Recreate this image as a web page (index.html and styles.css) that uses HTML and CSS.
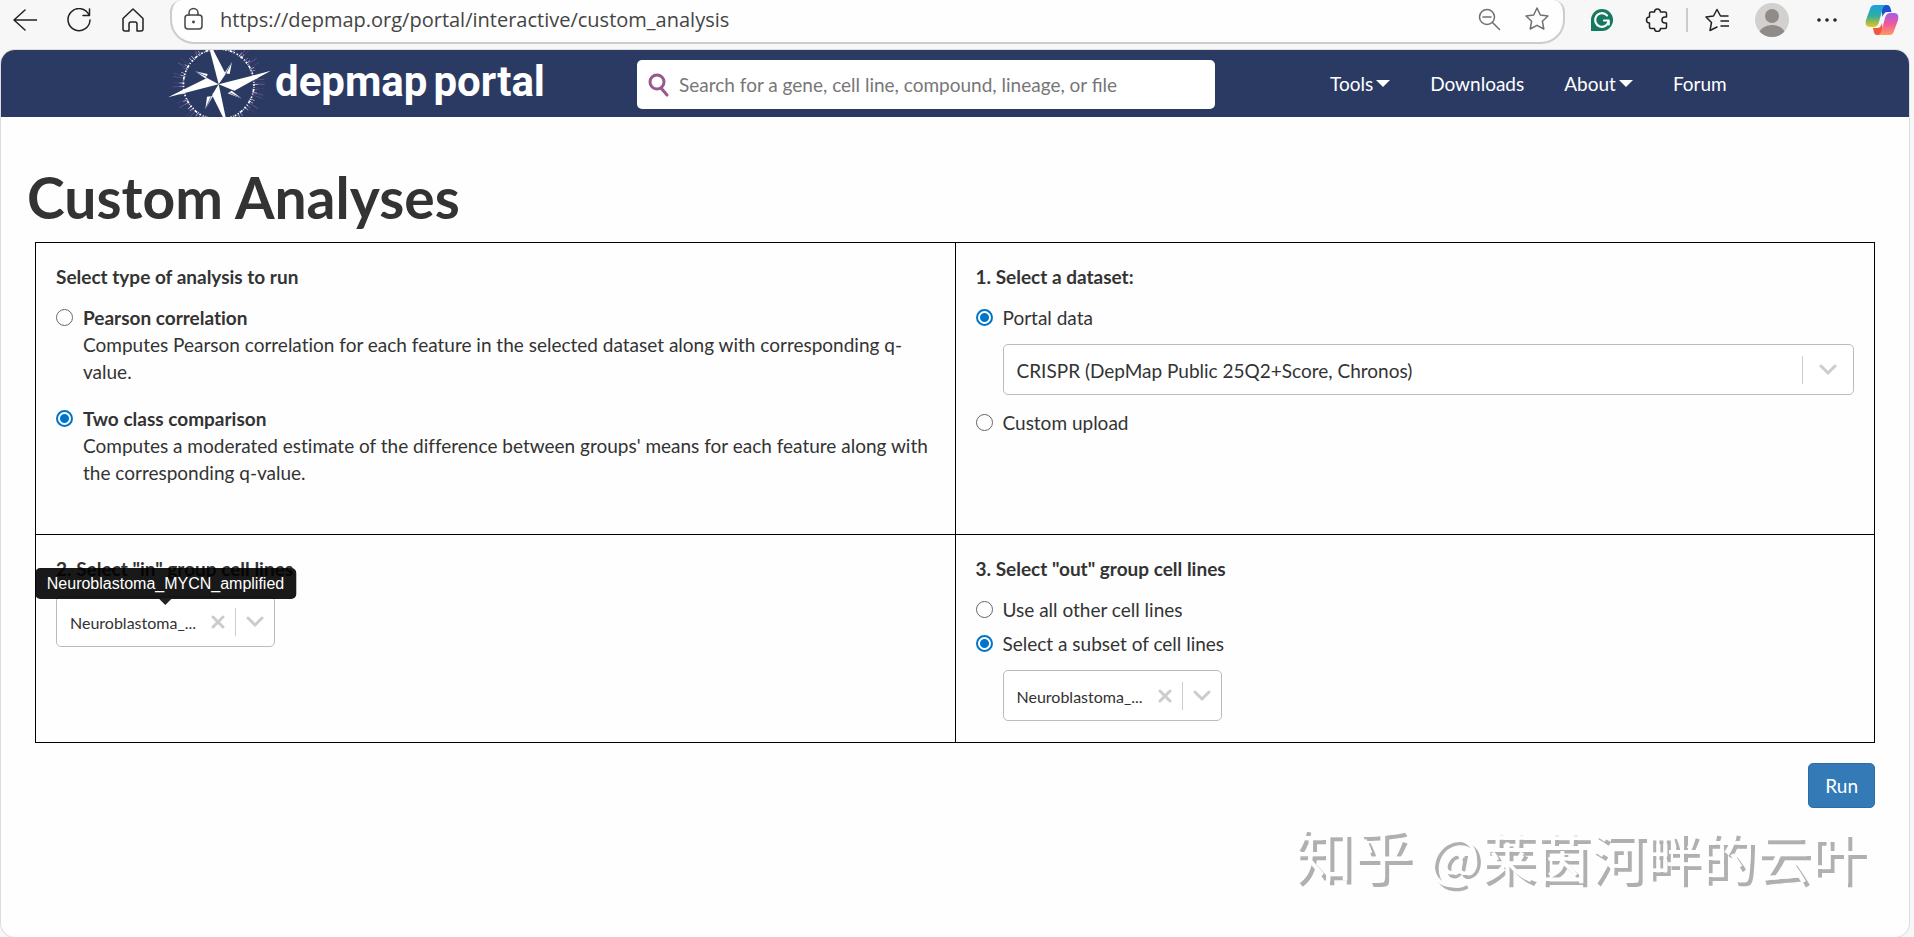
FILE: index.html
```html
<!DOCTYPE html>
<html lang="en">
<head>
  <meta charset="UTF-8">
  <meta name="viewport" content="width=device-width, initial-scale=1.0">
  <title>Custom Analyses</title>
  <link rel="stylesheet" href="styles.css">
</head>

<body>
  <div class="browser-bar">
    <div class="browser-nav">
      <button type="button" aria-label="Back">
        <svg class="icon" viewBox="0 0 24 24"><path d="M24 12H1M12 2L1 12l11 10" /></svg>
      </button>
      <button type="button" aria-label="Refresh">
        <svg class="icon" viewBox="0 0 24 24"><path d="M22 7A11 11 0 1 0 23 12M22.500 1v6.500H16" /></svg>
      </button>
      <button type="button" aria-label="Home">
        <svg class="icon" viewBox="0 0 24 24"><path d="M2 10.500L12 1l10 9.500V21a2 2 0 0 1-2 2h-4v-7a2 2 0 0 0-2-2h-4a2 2 0 0 0-2 2v7H4a2 2 0 0 1-2-2z" /></svg>
      </button>
    </div>

    <div class="address-bar">
      <svg class="icon icon-grey" viewBox="0 0 24 24"><rect x="4" y="8" width="17" height="14" rx="3" /><path d="M8 8V6a4.500 4.500 0 0 1 9 0v2" /><circle cx="12.500" cy="15" r=".7" fill="currentColor" /></svg>
      <input class="address" type="text" aria-label="Address" value="https://depmap.org/portal/interactive/custom_analysis">
      <button type="button" aria-label="Zoom out">
        <svg class="icon icon-light" viewBox="0 0 24 24"><circle cx="10" cy="10" r="7.500" /><path d="M6 10h8M15.500 15.500L22.500 22.500" /></svg>
      </button>
      <button type="button" aria-label="Add to favorites">
        <svg class="icon icon-light" viewBox="0 0 24 24"><path d="M12 1l3.300 7 7.700 1-5.600 5.300L18.800 22 12 18.300 5.200 22l1.400-7.700L1 9l7.700-1z" /></svg>
      </button>
    </div>

    <div class="browser-tools">
      <button type="button" aria-label="Grammarly">
        <svg class="icon" viewBox="0 0 24 24"><path d="M1 23V12A11 11 0 1 1 12 23z" fill="#15795f" stroke="none" /><path d="M17 7.500A6.800 6.800 0 1 0 18.700 12.500H14M18.700 12.500v4" stroke="#fff" stroke-width="2.200" /></svg>
      </button>
      <button type="button" aria-label="Extensions">
        <svg class="icon" viewBox="0 0 24 24"><path d="M4.500 9V5.500A1.500 1.500 0 0 1 6 4h3.500a3 3 0 0 1 6 0H20a1.500 1.500 0 0 1 1.500 1.500V9H20a3 3 0 0 0 0 6h1.500v4a1.500 1.500 0 0 1-1.500 1.500h-4.500a3 3 0 0 1-6 0H6A1.500 1.500 0 0 1 4.500 19v-4a3 3 0 0 1 0-6z" /></svg>
      </button>
    </div>
    <span class="divider"></span>
    <div class="browser-tools">
      <button type="button" aria-label="Favorites">
        <svg class="icon" viewBox="0 0 24 24"><path d="M12 19l-7 3.500 1.500-8L1 9l7.500-1L12 1.500 15.500 8H23M16 13h8M16 18h8" /></svg>
      </button>
      <button type="button" aria-label="Profile">
        <svg class="icon-large" viewBox="0 0 34 34"><clipPath id="face"><circle cx="17" cy="17" r="17" /></clipPath><g clip-path="url(#face)"><path d="M0 0h34v34H0z" fill="#d3d1cf" /><circle cx="17" cy="13" r="7" fill="#8e8b89" /><ellipse cx="17" cy="31" rx="13" ry="9" fill="#8e8b89" /></g></svg>
      </button>
      <button type="button" aria-label="More">
        <svg class="icon" viewBox="0 0 24 24"><g fill="currentColor" stroke="none"><circle cx="4" cy="12" r="1.800" /><circle cx="12" cy="12" r="1.800" /><circle cx="20" cy="12" r="1.800" /></g></svg>
      </button>
      <button type="button" aria-label="Copilot">
        <svg class="icon-large" viewBox="0 0 34 34">
          <defs>
            <linearGradient id="cool" x1="0" y1="0" x2="0" y2="1"><stop offset="0" stop-color="#1b9fe8" /><stop offset=".5" stop-color="#2fae9b" /><stop offset="1" stop-color="#ecc51c" /></linearGradient>
            <linearGradient id="warm" x1="0" y1="0" x2="0" y2="1"><stop offset="0" stop-color="#a45bea" /><stop offset=".5" stop-color="#ee5a9c" /><stop offset="1" stop-color="#ff9a5c" /></linearGradient>
          </defs>
          <path d="M16 2h6c3 0 3.500 3 4.500 7h-4c-3 0-4 2-5 5z" fill="#1c50cf" />
          <path d="M18 32h-6c-3 0-3-3-4-7h4c3 0 4-2 5-5z" fill="#ef5a3c" />
          <path d="M10 2h12c-3 0-4 2-5 6l-3 11c-1 4-3 5-6 5H5c-4 0-5-3-4-7L5 6c1-3 2-4 5-4z" fill="url(#cool)" />
          <path d="M24 32H12c3 0 4-2 5-6l3-11c1-4 3-5 6-5h3c4 0 5 3 4 7l-4 11c-1 3-2 4-5 4z" fill="url(#warm)" />
        </svg>
      </button>
    </div>
  </div>

  <div class="page">
    <header class="header">
      <a class="logo" href="#">
        <svg class="compass" viewBox="0 0 310 201">
          <circle cx="157" cy="103" r="122" fill="none" stroke="#a468b0" stroke-opacity=".6" stroke-width="32" stroke-dasharray="2 9 1 16 2 7 1 28 2 12 1 44" />
          <circle cx="157" cy="103" r="110" fill="none" stroke="#c9b3dc" stroke-width="16" stroke-dasharray="2 13 1 8 2 20 2 6" />
          <circle cx="157" cy="103" r="106" fill="none" stroke="#fff" stroke-width="5" stroke-dasharray="5 4 2 3 9 5 3 6" />
          <g fill="#fff">
            <path d="M120-40L178 72 157 103z" />
            <path d="M312 63L204 122 157 103z" />
            <path d="M184 230L137 135 157 103z" />
            <path d="M5 142L122 84 157 103z" />
            <path d="M197 35L190 72 174 70z" />
            <path d="M86 64L124 72 119 86z" />
            <path d="M227 146L196 122 184 130z" />
            <path d="M117 178L122 140 140 138z" />
          </g>
          <path d="M197 35L178 72M86 64L122 80M227 146L190 128M117 178L134 140" stroke="#2b3a63" stroke-width="2" />
        </svg>
        <span class="logo-text"><span>depmap</span><span>portal</span></span>
      </a>
      <div class="search">
        <svg class="search-icon" viewBox="0 0 22 24"><circle cx="9" cy="9" r="7" /><path d="M13 15l6 7" /></svg>
        <input type="text" aria-label="Search" placeholder="Search for a gene, cell line, compound, lineage, or file">
      </div>
      <nav class="menu">
        <a href="#">Tools <span class="caret"></span></a>
        <a href="#">Downloads</a>
        <a href="#">About <span class="caret"></span></a>
        <a href="#">Forum</a>
      </nav>
    </header>

    <main>
      <h1>Custom Analyses</h1>
      <form class="analysis">
        <div class="grid">
          <section class="cell cell-tall">
            <h2>Select type of analysis to run</h2>
            <div class="choice">
              <input type="radio" name="analysis" id="pearson">
              <label for="pearson"><strong>Pearson correlation</strong><br>Computes Pearson correlation for each feature in the selected dataset along with corresponding q-<wbr>value.</label>
            </div>
            <div class="choice choice-spaced">
              <input type="radio" name="analysis" id="two-class" checked>
              <label for="two-class"><strong>Two class comparison</strong><br>Computes a moderated estimate of the difference between groups' means for each feature along with the corresponding q-value.</label>
            </div>
          </section>

          <section class="cell cell-tall">
            <h2>1. Select a dataset:</h2>
            <div class="choice">
              <input type="radio" name="dataset" id="portal-data" checked>
              <label for="portal-data">Portal data</label>
            </div>
            <div class="dropdown dropdown-wide indented">
              <select aria-label="Dataset">
                <option>CRISPR (DepMap Public 25Q2+Score, Chronos)</option>
              </select>
              <span class="separator"></span>
              <svg class="chevron" viewBox="0 0 18 12"><path d="M2 2l7 7 7-7" /></svg>
            </div>
            <div class="choice">
              <input type="radio" name="dataset" id="custom-upload">
              <label for="custom-upload">Custom upload</label>
            </div>
          </section>

          <section class="cell">
            <h2>2. Select "in" group cell lines</h2>
            <div class="dropdown">
              <select aria-label="In group cell lines">
                <option>Neuroblastoma_...</option>
              </select>
              <button class="clear" type="button" aria-label="Clear">
                <svg viewBox="0 0 14 14"><path d="M2 2l10 10M12 2L2 12" /></svg>
              </button>
              <span class="separator"></span>
              <svg class="chevron" viewBox="0 0 18 12"><path d="M2 2l7 7 7-7" /></svg>
              <div class="tooltip" role="tooltip">Neuroblastoma_MYCN_amplified</div>
            </div>
          </section>

          <section class="cell">
            <h2>3. Select "out" group cell lines</h2>
            <div class="choice">
              <input type="radio" name="out-group" id="all-other">
              <label for="all-other">Use all other cell lines</label>
            </div>
            <div class="choice choice-close">
              <input type="radio" name="out-group" id="subset" checked>
              <label for="subset">Select a subset of cell lines</label>
            </div>
            <div class="dropdown indented">
              <select aria-label="Out group cell lines">
                <option>Neuroblastoma_...</option>
              </select>
              <button class="clear" type="button" aria-label="Clear">
                <svg viewBox="0 0 14 14"><path d="M2 2l10 10M12 2L2 12" /></svg>
              </button>
              <span class="separator"></span>
              <svg class="chevron" viewBox="0 0 18 12"><path d="M2 2l7 7 7-7" /></svg>
            </div>
          </section>
        </div>
        <div class="actions">
          <button class="run" type="button">Run</button>
        </div>
      </form>
      <p class="watermark" lang="zh-CN"><span class="watermark-site">知乎</span> @莱茵河畔的云叶</p>
    </main>
  </div>
</body>
</html>
```
FILE: styles.css
```css
* {
  box-sizing: border-box;
}

body {
  margin: 0;
  background: #f7f7f7;
  color: #333;
  font-family: Lato, sans-serif;
  font-size: 19px;
  line-height: 27px;
}

button {
  padding: 0;
  border: 0;
  background: none;
  color: inherit;
  font: inherit;
  cursor: pointer;
}

input,
select {
  font: inherit;
  color: inherit;
}

/* Browser toolbar */
.browser-bar {
  display: flex;
  height: 50px;
  padding: 0 15px 0 13px;
  color: #222;
}

.browser-nav,
.browser-tools {
  display: flex;
  height: 40px;
  align-items: center;
}

.browser-nav {
  gap: 30px;
  margin-right: 25px;
}

.browser-tools {
  gap: 21px;
}

.browser-tools button {
  display: flex;
  justify-content: center;
  width: 34px;
}

.icon {
  display: block;
  width: 24px;
  height: 24px;
  fill: none;
  stroke: currentColor;
  stroke-width: 1.5;
  stroke-linecap: round;
  stroke-linejoin: round;
}

.icon-grey {
  color: #444;
}

.icon-light {
  color: #707070;
}

.icon-large {
  display: block;
  width: 34px;
  height: 34px;
}

.divider {
  width: 2px;
  height: 24px;
  margin: 8px 12px;
  background: #ccc;
}

.address-bar {
  display: flex;
  flex: 1;
  align-items: center;
  gap: 24px;
  height: 44px;
  margin-right: 20px;
  padding: 0 14px 4px 9px;
  border: 2px solid #ccc;
  border-top: 0;
  border-radius: 12px 12px 24px 24px;
  background: #fefefe;
}

.address {
  flex: 1;
  margin-left: -9px;
  padding: 0;
  border: 0;
  background: none;
  color: #444;
  font-family: "Open Sans", sans-serif;
  font-size: 20px;
}

/* Page */
.page {
  min-height: calc(100vh - 50px);
  margin: 0 5px 0 1px;
  border-radius: 14px;
  background: #fefefe;
  box-shadow: 0 0 0 1px #ddd;
}

.header {
  display: flex;
  align-items: center;
  height: 67px;
  padding-left: 165px;
  border-radius: 14px 14px 0 0;
  background: #2b3a63;
  color: #fff;
}

.logo {
  display: flex;
  flex: 0 0 471px;
  gap: 5px;
  color: inherit;
  text-decoration: none;
}

.compass {
  width: 104px;
  height: 67px;
}

.logo-text {
  display: flex;
  gap: 6px;
  font-family: Roboto, sans-serif;
  font-size: 42px;
  font-weight: bold;
  line-height: 64px;
}

.search {
  display: flex;
  flex: 0 1 578px;
  align-items: center;
  gap: 9px;
  height: 49px;
  margin-top: 2px;
  padding: 0 11px;
  border-radius: 5px;
  background: #fff;
}

.search-icon {
  flex: none;
  width: 22px;
  height: 24px;
  fill: none;
  stroke: #96588f;
  stroke-width: 3;
  stroke-linecap: round;
}

.search input {
  flex: 1;
  padding: 0;
  border: 0;
  background: none;
  color: #333;
}

.search input::placeholder {
  color: #777;
}

.menu {
  display: flex;
  gap: 40px;
  margin-left: 115px;
}

.menu a {
  display: flex;
  align-items: center;
  gap: 3px;
  color: #fff;
  text-decoration: none;
}

.caret {
  border: 7px solid transparent;
  border-top-color: #fff;
  border-bottom: 0;
}

main {
  padding: 44px 24px 0;
  font-variant-ligatures: no-common-ligatures;
}

h1 {
  margin: 0 2px 9px;
  font-size: 57px;
  line-height: 72px;
}

.analysis {
  margin: 0 10px;
}

.grid {
  display: grid;
  grid-template-columns: 1fr 1fr;
  border: 1px solid #000;
  border-width: 1px 0 0 1px;
}

.cell {
  padding: 20px 20px 21px;
  border: 1px solid #000;
  border-width: 0 1px 1px 0;
}

.cell-tall {
  padding-bottom: 48px;
}

h2 {
  margin: 0 0 14px;
  font-size: 19px;
  line-height: 27px;
}

/* Radio buttons */
.choice {
  display: flex;
  gap: 10px;
}

.choice-spaced {
  margin-top: 20px;
}

.choice-close {
  margin-top: 7px;
}

.choice input {
  flex: none;
  appearance: none;
  width: 17px;
  height: 17px;
  margin: 5px 0;
  border: 1px solid #666;
  border-radius: 50%;
  background: #fff;
}

.choice input:checked {
  border: 2px solid #0075c8;
  background: radial-gradient(#0075c8 4px, #fff 5px);
}

/* Dropdowns */
.dropdown {
  position: relative;
  display: flex;
  align-items: center;
  width: 219px;
  height: 51px;
  padding-right: 10px;
  border: 1px solid #bbb;
  border-radius: 5px;
  background: #fff;
  font-size: 16px;
}

.dropdown-wide {
  width: auto;
  padding-right: 16px;
  font-size: 19px;
}

.indented {
  margin: 13px 0 0 27px;
}

.dropdown + .choice {
  margin-top: 14px;
}

.dropdown select {
  flex: 1;
  min-width: 0;
  height: 100%;
  padding: 1px 0 0 13px;
  border: 0;
  background: none;
  appearance: none;
}

.clear svg {
  display: block;
  width: 14px;
  height: 14px;
}

.clear path,
.chevron path {
  fill: none;
  stroke: #ccc;
  stroke-width: 3;
  stroke-linecap: round;
}

.separator {
  width: 1px;
  height: 28px;
  margin: 0 10px;
  background: #ccc;
}

.dropdown-wide .separator {
  margin-right: 16px;
}

.chevron {
  width: 18px;
  height: 12px;
}

.tooltip {
  position: absolute;
  bottom: calc(100% - 2px);
  left: 50%;
  padding: 2px 12px;
  border-radius: 5px;
  background: rgba(0, 0, 0, 0.9);
  color: #fff;
  font-family: "Liberation Sans", sans-serif;
  font-size: 16px;
  white-space: nowrap;
  transform: translateX(-50%);
}

.tooltip::after {
  content: "";
  position: absolute;
  top: 100%;
  left: 50%;
  margin-left: -6px;
  border: 6px solid transparent;
  border-top-color: #222;
  border-bottom: 0;
}

.actions {
  display: flex;
  justify-content: flex-end;
  margin-top: 20px;
}

.run {
  height: 45px;
  padding: 0 16px;
  border: 1px solid #2e6da4;
  border-radius: 5px;
  background: #337ab7;
  color: #fff;
}

.watermark {
  margin: 9px 20px 0;
  color: #fefefe;
  font-family: "Noto Sans CJK SC", sans-serif;
  font-size: 55px;
  line-height: 72px;
  text-align: right;
  text-shadow: 4px 4px 0 #b0b0b0;
}

.watermark-site {
  margin-right: 4px;
  font-size: 59px;
}
```
